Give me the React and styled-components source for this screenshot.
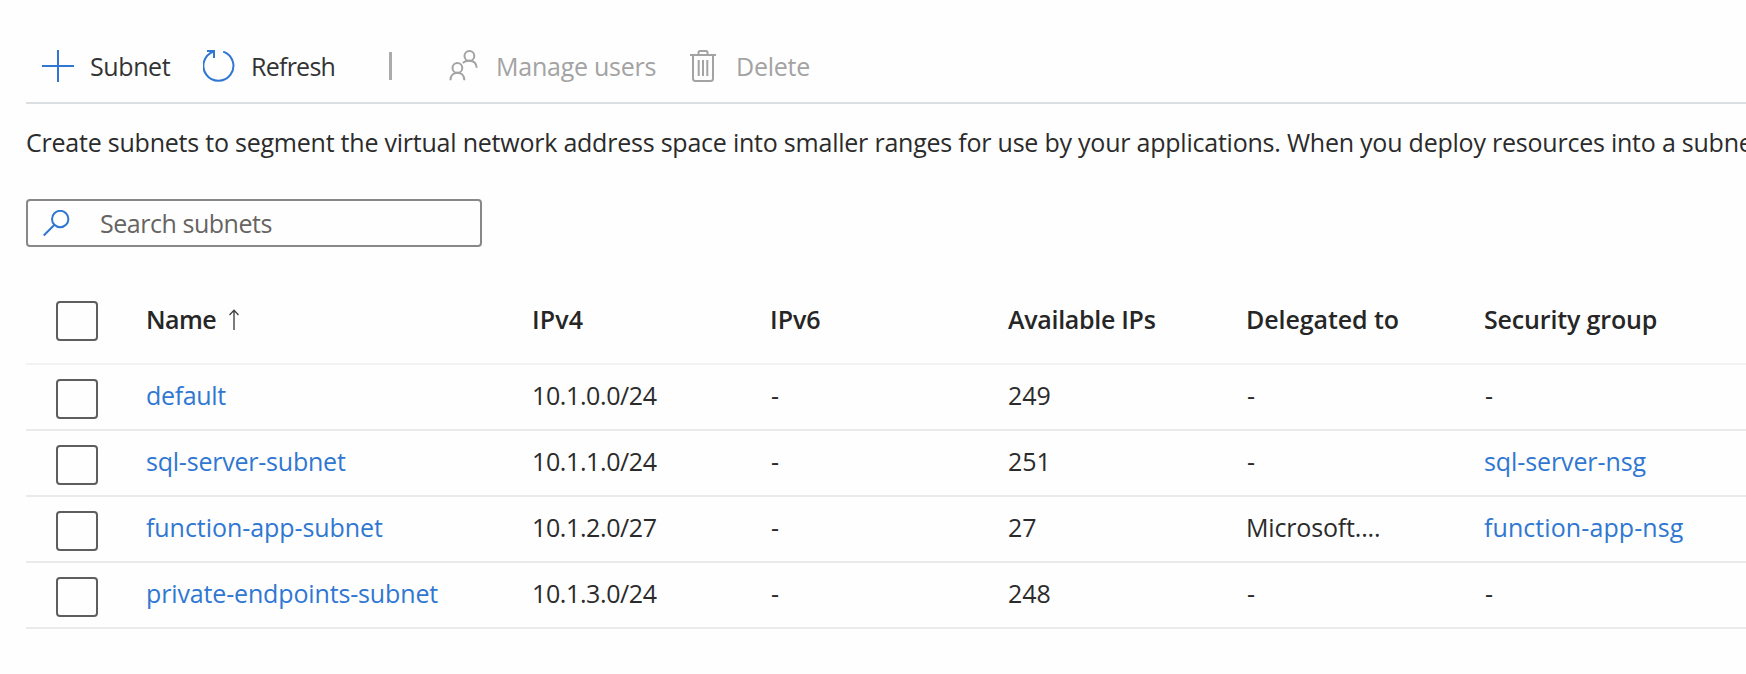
import React from "react";
import styled, { createGlobalStyle } from "styled-components";

const blue = "#3077d2";
const ink = "#2b2b2b";
const muted = "#a3a3a3";

const GlobalStyle = createGlobalStyle`
  * { box-sizing: border-box; }
  body {
    margin: 0;
    background: #fefefe;
    color: ${ink};
    font: 400 25px/34px "Open Sans", "Noto Sans", sans-serif;
    overflow: hidden;
  }
`;

const Page = styled.main`
  height: 674px;
  padding-left: 26px;
  overflow: hidden;
`;

const Toolbar = styled.div`
  display: flex;
  align-items: center;
  height: 104px;
  padding: 30px 0 0 16px;
  border-bottom: 2px solid #d9dfe3;
`;

const ToolButton = styled.button`
  display: flex;
  align-items: center;
  gap: ${(p) => p.$gap ?? 16}px;
  width: ${(p) => p.$width}px;
  padding: 0;
  border: 0;
  background: none;
  font: inherit;
  color: ${(p) => (p.disabled ? muted : "#333")};
  white-space: nowrap;
`;

const Icon = styled.svg`
  flex: none;
  display: block;
  fill: none;
  stroke: ${(p) => p.$color ?? blue};
  stroke-width: ${(p) => p.$stroke ?? 2};
`;

const Divider = styled.span`
  flex: none;
  width: 3px;
  height: 28px;
  margin-right: 56px;
  background: #ababab;
`;

const Text = styled.span`
  letter-spacing: ${(p) => p.$track ?? -0.2}px;
  white-space: nowrap;
`;

const Dash = styled(Text)`
  padding-left: 1px;
`;

const Description = styled.p`
  margin: 21px 0 40px;
  letter-spacing: -0.225px;
  white-space: nowrap;
`;

const SearchBox = styled.label`
  display: flex;
  align-items: center;
  gap: 30px;
  width: 456px;
  height: 48px;
  padding-left: 15px;
  border: 2px solid #8a8886;
  border-radius: 4px;
  color: #666462;
`;

const Table = styled.div`
  margin-top: 41px;
`;

const Row = styled.div`
  display: grid;
  grid-template-columns: 120px 386px 238px 238px 238px 238px 1fr;
  align-items: start;
  height: 66px;
  padding-top: 13px;
  border-bottom: 2px solid #eaeaea;
`;

const HeaderRow = styled(Row)`
  height: 77px;
  padding-top: 14px;
  border-bottom-color: #f2f2f2;
  font-weight: 600;
  color: #262626;
`;

const Cell = styled.div`
  display: flex;
  align-items: center;
  gap: 13px;
`;

const Checkbox = styled.span`
  width: 42px;
  height: 40px;
  margin: ${(p) => (p.$header ? -1 : 1)}px 0 0 30px;
  border: 2px solid #5f5e5d;
  border-radius: 4px;
`;

const Link = styled(Text).attrs({ as: "a" })`
  color: ${blue};
`;

const PlusIcon = () => (
  <Icon width="32" height="32">
    <path d="M16 0v32M0 16h32" />
  </Icon>
);

const RefreshIcon = () => (
  <Icon width="32" height="32">
    <path d="M4 1h7v7" />
    <path d="M10.6 1.6A15 15 0 1 0 20.2 1.6" />
  </Icon>
);

const UsersIcon = () => (
  <Icon width="32" height="32" $color={muted}>
    <circle cx="21.4" cy="5.9" r="4.9" />
    <path d="M14.8 12.9c1.7-1.5 4-2.2 6.6-2.1 4.2.1 7 2.8 7.3 6.9" />
    <circle cx="9.4" cy="17.9" r="4.9" />
    <path d="M2.4 30.200c.2-4.5 3-7.4 7-7.4s6.800 2.900 7 7.400" />
  </Icon>
);

const TrashIcon = () => (
  <Icon width="32" height="32" $color={muted}>
    <path d="M3 5h26M11.500 5V2.500q0-1.500 1.500-1.500h6q1.500 0 1.500 1.500V5" />
    <path d="M6 5v23.500q0 2.500 2.500 2.500h15q2.500 0 2.500-2.500V5M11.700 10v16M16 10v16M20.300 10v16" />
  </Icon>
);

const SearchIcon = () => (
  <Icon width="27" height="27">
    <circle cx="17.200" cy="9" r="8.200" />
    <path d="M11.200 15L.7 25.500" />
  </Icon>
);

const SortArrow = () => (
  <Icon width="10" height="21" $color="#444" $stroke={1.4}>
    <path d="M5 1v20M.5 6L5 1.3 9.5 6" />
  </Icon>
);

const headers = [
  ["IPv4", 0.1],
  ["IPv6", 0],
  ["Available IPs", -0.3],
  ["Delegated to", -0.08],
  ["Security group", -0.158],
];

const subnets = [
  { name: "default", track: -0.35, ipv4: "10.1.0.0/24", free: "249", to: "-" },
  { name: "sql-server-subnet", track: -0.22, ipv4: "10.1.1.0/24", free: "251", to: "-", nsg: "sql-server-nsg", nsgTrack: -0.1 },
  { name: "function-app-subnet", track: -0.06, ipv4: "10.1.2.0/27", free: "27", to: "Microsoft....", nsg: "function-app-nsg", nsgTrack: 0.08 },
  { name: "private-endpoints-subnet", track: -0.145, ipv4: "10.1.3.0/24", free: "248", to: "-" },
];

const Value = ({ children, track }) =>
  children === "-" ? <Dash>-</Dash> : <Text $track={track}>{children}</Text>;

export default function App() {
  return (
    <>
      <GlobalStyle />
      <Page>
        <Toolbar>
          <ToolButton $width={161}>
            <PlusIcon />
            <Text $track={-0.4}>Subnet</Text>
          </ToolButton>
          <ToolButton $width={186}>
            <RefreshIcon />
            <Text $track={-0.75}>Refresh</Text>
          </ToolButton>
          <Divider />
          <ToolButton $width={239} $gap={16} disabled>
            <UsersIcon />
            <Text $track={-0.24}>Manage users</Text>
          </ToolButton>
          <ToolButton $width={130} $gap={17} disabled>
            <TrashIcon />
            <Text $track={-0.23}>Delete</Text>
          </ToolButton>
        </Toolbar>
        <Description>
          Create subnets to segment the virtual network address space into smaller ranges for use by your applications. When you deploy resources into a subnet
        </Description>
        <SearchBox>
          <SearchIcon />
          <Text $track={-0.46}>Search subnets</Text>
        </SearchBox>
        <Table>
          <HeaderRow>
            <Checkbox $header />
            <Cell>
              <Text $track={-0.58}>Name</Text>
              <SortArrow />
            </Cell>
            {headers.map(([label, track]) => (
              <Cell key={label}>
                <Text $track={track}>{label}</Text>
              </Cell>
            ))}
          </HeaderRow>
          {subnets.map((s) => (
            <Row key={s.name}>
              <Checkbox />
              <Link $track={s.track}>{s.name}</Link>
              <Text $track={-0.39}>{s.ipv4}</Text>
              <Value>-</Value>
              <Value track={0}>{s.free}</Value>
              <Value track={-0.17}>{s.to}</Value>
              {s.nsg ? <Link $track={s.nsgTrack}>{s.nsg}</Link> : <Value>-</Value>}
            </Row>
          ))}
        </Table>
      </Page>
    </>
  );
}
